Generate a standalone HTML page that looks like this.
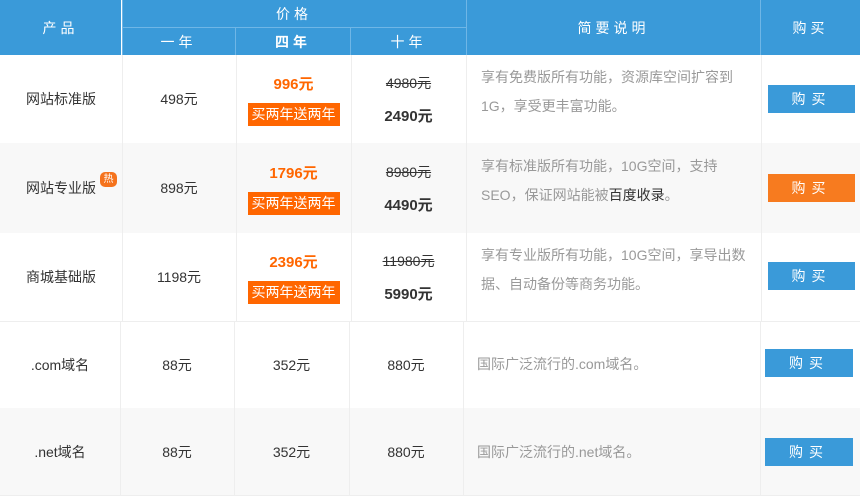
<!DOCTYPE html>
<html><head><meta charset="utf-8"><style>
*{margin:0;padding:0;box-sizing:border-box}
body{width:860px;height:500px;background:#fff;position:relative;overflow:hidden;font-family:"Liberation Sans","Noto Sans CJK SC",sans-serif;font-size:14px;color:#333}
.a{position:absolute}
.h{background:#3a9ad9;color:#fff;display:flex;align-items:center;justify-content:center;letter-spacing:4px;font-size:14px}
.c{position:absolute;display:flex;flex-direction:column;align-items:center;justify-content:center;text-align:center}
.g{background:#f8f8f8}
.vl{position:absolute;width:1px;background:#eee}
.or{color:#ff6600;font-weight:bold;font-size:15px}
.tag{background:#ff6600;color:#fff;font-size:14px;width:92px;height:23px;line-height:23px;margin-top:9px}
.st{text-decoration:line-through;font-size:14px}
.bd{font-weight:bold;font-size:15px;margin-top:12px}
.d{position:absolute;color:#999;font-size:14px;line-height:29px}
.btn{position:absolute;background:#3a9ad9;color:#fff;text-align:center;line-height:28px;height:28px;letter-spacing:6px;font-size:14px}
</style></head><body>
<!-- header -->
<div class="a h" style="left:0;top:0;width:121px;height:55px">产品</div>
<div class="a h" style="left:122px;top:0;width:344px;height:27px">价格</div>
<div class="a h" style="left:122px;top:28px;width:113px;height:27px">一年</div>
<div class="a h" style="left:236px;top:28px;width:114px;height:27px;font-weight:bold">四年</div>
<div class="a h" style="left:351px;top:28px;width:115px;height:27px">十年</div>
<div class="a h" style="left:467px;top:0;width:293px;height:55px">简要说明</div>
<div class="a h" style="left:761px;top:0;width:99px;height:55px">购买</div>
<div class="a" style="left:122px;top:0;width:1px;height:55px;background:#6fb6e6"></div>
<div class="a" style="left:466px;top:0;width:1px;height:55px;background:#6fb6e6"></div>
<div class="a" style="left:760px;top:0;width:1px;height:55px;background:#6fb6e6"></div>
<div class="a" style="left:122px;top:27px;width:344px;height:1px;background:#6fb6e6"></div>
<div class="a" style="left:235px;top:28px;width:1px;height:27px;background:#6fb6e6"></div>
<div class="a" style="left:350px;top:28px;width:1px;height:27px;background:#6fb6e6"></div>
<!-- row bgs -->
<div class="a g" style="left:0;top:143px;width:860px;height:90px"></div>
<div class="a" style="left:0;top:321px;width:860px;height:1px;background:#eee"></div>
<div class="a g" style="left:0;top:408px;width:860px;height:87px"></div>
<div class="a" style="left:0;top:495px;width:860px;height:1px;background:#eee"></div>
<!-- top vlines -->
<div class="vl" style="left:122px;top:55px;height:266px"></div>
<div class="vl" style="left:236px;top:55px;height:266px"></div>
<div class="vl" style="left:351px;top:55px;height:266px"></div>
<div class="vl" style="left:466px;top:55px;height:266px"></div>
<div class="vl" style="left:761px;top:55px;height:266px"></div>
<!-- bottom vlines -->
<div class="vl" style="left:120px;top:322px;height:174px"></div>
<div class="vl" style="left:234px;top:322px;height:174px"></div>
<div class="vl" style="left:349px;top:322px;height:174px"></div>
<div class="vl" style="left:463px;top:322px;height:174px"></div>
<div class="vl" style="left:760px;top:322px;height:174px"></div>
<!-- row1 -->
<div class="c" style="left:0;top:55px;width:122px;height:88px">网站标准版</div>
<div class="c" style="left:122px;top:55px;width:114px;height:88px">498元</div>
<div class="c" style="left:236px;top:55px;width:115px;height:88px"><div class="or">996元</div><div class="tag">买两年送两年</div></div>
<div class="c" style="left:351px;top:55px;width:115px;height:88px"><div class="st">4980元</div><div class="bd">2490元</div></div>
<div class="d" style="left:481px;top:63px;width:270px">享有免费版所有功能，资源库空间扩容到1G，享受更丰富功能。</div>
<div class="btn" style="left:768px;top:85px;width:87px">购买</div>
<!-- row2 -->
<div class="c" style="left:0;top:143px;width:122px;height:90px">网站专业版</div>
<div class="a" style="left:100px;top:172px;width:17px;height:15px;background:#f5731d;border-radius:5px;color:#fff;font-size:10px;line-height:15px;text-align:center">热</div>
<div class="c" style="left:122px;top:143px;width:114px;height:90px">898元</div>
<div class="c" style="left:236px;top:143px;width:115px;height:90px"><div class="or">1796元</div><div class="tag">买两年送两年</div></div>
<div class="c" style="left:351px;top:143px;width:115px;height:90px"><div class="st">8980元</div><div class="bd">4490元</div></div>
<div class="d" style="left:481px;top:152px;width:270px">享有标准版所有功能，10G空间，支持SEO，保证网站能被<span style="color:#333">百度收录</span>。</div>
<div class="btn" style="left:768px;top:174px;width:87px;background:#f77b1f">购买</div>
<!-- row3 -->
<div class="c" style="left:0;top:233px;width:122px;height:88px">商城基础版</div>
<div class="c" style="left:122px;top:233px;width:114px;height:88px">1198元</div>
<div class="c" style="left:236px;top:233px;width:115px;height:88px"><div class="or">2396元</div><div class="tag">买两年送两年</div></div>
<div class="c" style="left:351px;top:233px;width:115px;height:88px"><div class="st">11980元</div><div class="bd">5990元</div></div>
<div class="d" style="left:481px;top:241px;width:270px">享有专业版所有功能，10G空间，享导出数据、自动备份等商务功能。</div>
<div class="btn" style="left:768px;top:262px;width:87px">购买</div>
<!-- row4 -->
<div class="c" style="left:0;top:322px;width:120px;height:86px">.com域名</div>
<div class="c" style="left:120px;top:322px;width:114px;height:86px">88元</div>
<div class="c" style="left:234px;top:322px;width:115px;height:86px">352元</div>
<div class="c" style="left:349px;top:322px;width:114px;height:86px">880元</div>
<div class="d" style="left:477px;top:350px">国际广泛流行的.com域名。</div>
<div class="btn" style="left:765px;top:349px;width:88px">购买</div>
<!-- row5 -->
<div class="c" style="left:0;top:408px;width:120px;height:87px">.net域名</div>
<div class="c" style="left:120px;top:408px;width:114px;height:87px">88元</div>
<div class="c" style="left:234px;top:408px;width:115px;height:87px">352元</div>
<div class="c" style="left:349px;top:408px;width:114px;height:87px">880元</div>
<div class="d" style="left:477px;top:438px">国际广泛流行的.net域名。</div>
<div class="btn" style="left:765px;top:438px;width:88px">购买</div>
</body></html>
